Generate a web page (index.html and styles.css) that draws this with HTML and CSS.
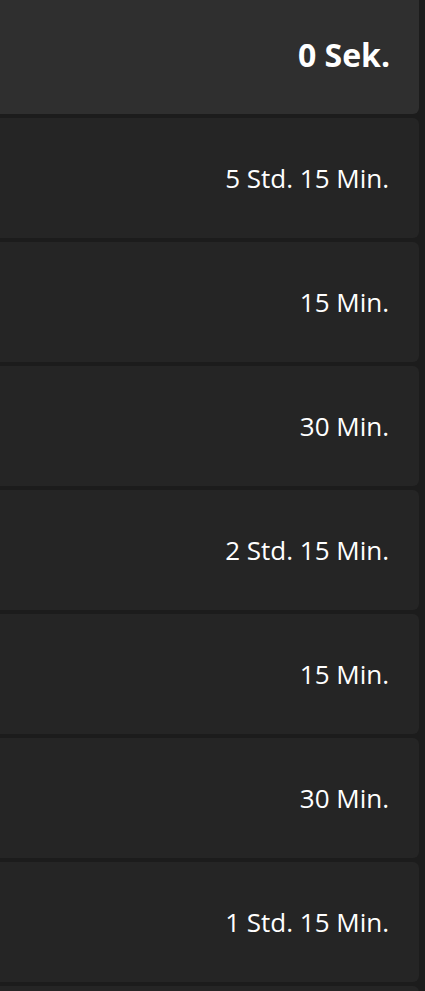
FILE: index.html
```html
<!DOCTYPE html>
<html>
<head>
  <title>Timer list</title>
  <link rel="stylesheet" href="styles.css">
</head>
<body>
  <div class="list">
    <div class="item active"><span>0 Sek.</span></div>
    <div class="item"><span>5 Std. 15 Min.</span></div>
    <div class="item"><span>15 Min.</span></div>
    <div class="item"><span>30 Min.</span></div>
    <div class="item"><span>2 Std. 15 Min.</span></div>
    <div class="item"><span>15 Min.</span></div>
    <div class="item"><span>30 Min.</span></div>
    <div class="item"><span>1 Std. 15 Min.</span></div>
    <div class="item"></div>
  </div>
</body>
</html>
```

FILE: styles.css
```css
body {
  margin: 0;
  background-color: #1c1c1c;
  font-family: "Open Sans", "Noto Sans", sans-serif;
  overflow: hidden;
}
.list {
  display: flex;
  flex-direction: column;
  gap: 4px;
  margin-top: -6px;
  margin-left: -10px;
  margin-right: 6px;
}
.item {
  height: 120px;
  display: flex;
  align-items: center;
  justify-content: flex-end;
  padding-right: 30px;
  background-color: #252525;
  border-radius: 6px;
  color: #ffffff;
  font-size: 26px;
  flex-shrink: 0;
}
.item.active {
  background-color: #2f2f2f;
  font-weight: 700;
  font-size: 32px;
  padding-right: 29px;
}
```
